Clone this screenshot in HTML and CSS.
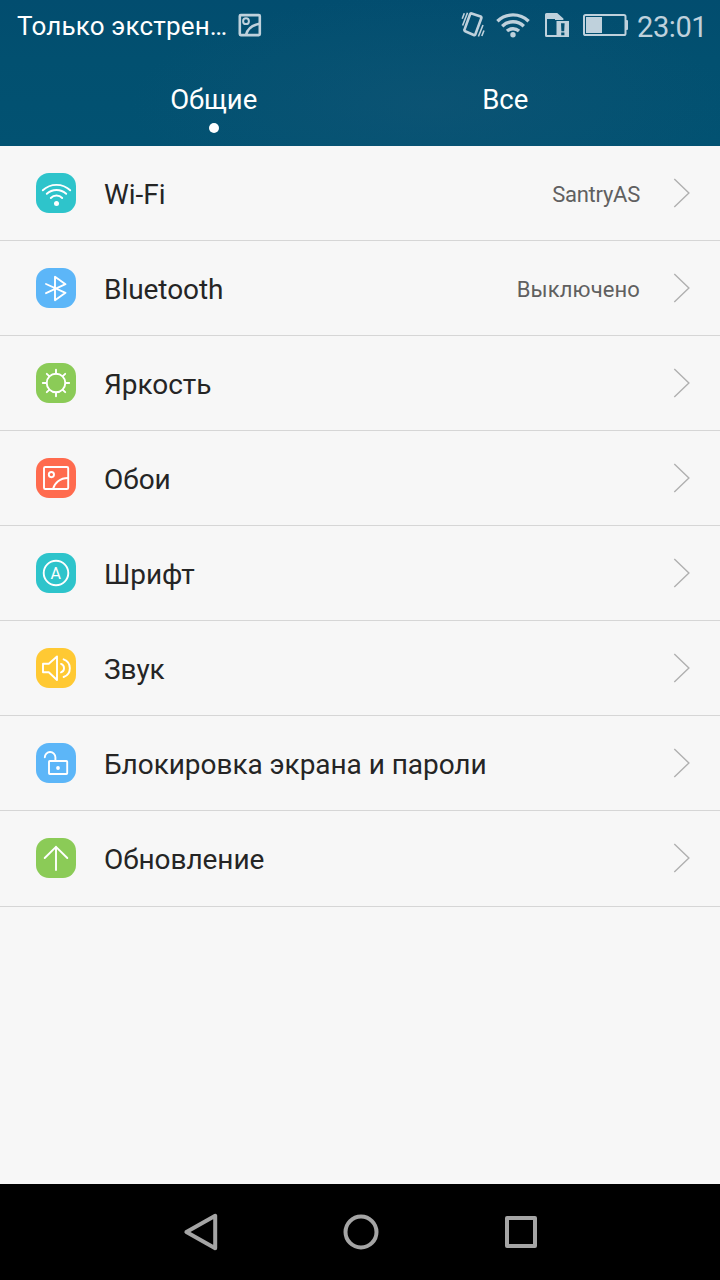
FILE: index.html
```html
<!DOCTYPE html>
<html lang="ru">
<head>
<meta charset="utf-8">
<title>Настройки</title>
<link rel="stylesheet" href="styles.css">
</head>
<body>
<div class="screen">
  <header class="header">
    <div class="status">
      <span class="carrier">Только экстрен…</span>
      <svg class="st-shot" width="24" height="24" viewBox="0 0 24 24"><g class="pale-line" stroke-width="2.6"><rect x="1.8" y="2.1" width="20" height="20" rx="1"/><circle cx="8" cy="8.2" r="2.9" stroke-width="2"/><path d="M8 22C9.5 16 13.5 12.2 21.5 10.8"/></g></svg>
      <span class="spacer"></span>
      <svg class="st-vibrate" width="24" height="28" viewBox="0 0 24 28"><g class="pale-line"><path d="M10.6 2.5L19.6 5.6Q20.8 6 20.3 7.3L14.4 23.3Q13.9 24.5 12.7 24L4.2 20.3Q3 19.8 3.5 18.6L9 3.5Q9.5 2.2 10.6 2.5Z" stroke-width="2.6"/><path d="M1.2 7.8L3.3 2.2M1.6 14.5L6.5 1.8M17.4 25.5L22 14M20.8 25L23 19.5" stroke-width="1.6"/></g></svg>
      <svg class="st-wifi" width="34" height="26" viewBox="0 0 34 26"><g class="pale-line" stroke-width="3.4"><path d="M1.4 9.2A22.5 22.5 0 0 1 32.6 9.2M6.2 14.2A15.5 15.5 0 0 1 27.8 14.2M11 19A9 9 0 0 1 23 19"/></g><circle class="pale" cx="17" cy="22.8" r="2.7"/></svg>
      <svg class="st-sim" width="24" height="24" viewBox="0 0 24 24"><path class="pale" fill-rule="evenodd" d="M1.5 0H12.2L18.4 5.5V7H10V22H14V24H1.5Q0 24 0 22.5V1.5Q0 0 1.5 0ZM2 6V22H10V6Z"/><path class="pale" fill-rule="evenodd" d="M11.5 8H24V24H11.5ZM16 10.3L16.4 18.2H19.2L19.6 10.3ZM16.2 19.4V22.3H19.4V19.4Z"/></svg>
      <svg class="st-battery" width="46" height="22" viewBox="0 0 46 22"><rect class="pale-line" x="1" y="1" width="41.5" height="20" rx="1.6" stroke-width="2"/><path class="pale" d="M3 3H19V19H3ZM43 6H44Q45 6 45 7V15Q45 16 44 16H43Z"/></svg>
      <span class="clock">23:01</span>
    </div>
    <nav class="tabs">
      <div class="tab tab-on">Общие</div>
      <div class="tab">Все</div>
    </nav>
  </header>

  <main class="list">
    <div class="row">
      <svg class="icon teal" viewBox="0 0 40 40"><path d="M6.8 17.3A20 20 0 0 1 34.2 17.3M10.8 20.8A14.3 14.3 0 0 1 30.2 20.8M14.8 25A7.8 7.8 0 0 1 26.2 25"/><circle class="dot" cx="20.5" cy="30.4" r="2.5"/></svg>
      <span class="name">Wi-Fi</span><span class="value value-latin">SantryAS</span>
      <svg class="chevron" viewBox="0 0 18 30"><path d="M1.3 1L15.9 15L1.3 29"/></svg>
    </div>
    <div class="row">
      <svg class="icon blue" viewBox="0 0 40 40"><path d="M10 25.2L29.5 16.2L19 8.8V32.3L29.5 24.8L10 16"/></svg>
      <span class="name">Bluetooth</span><span class="value value-cyrillic">Выключено</span>
      <svg class="chevron" viewBox="0 0 18 30"><path d="M1.3 1L15.9 15L1.3 29"/></svg>
    </div>
    <div class="row">
      <svg class="icon green" viewBox="0 0 40 40"><circle cx="20" cy="20" r="9.3"/><path d="M20 6.8V10.5M20 29.5V33.2M6.8 20H10.5M29.5 20H33.2M10.8 10.8L13.2 13.2M29.2 10.8L26.8 13.2M10.8 29.2L13.2 26.8M29.2 29.2L26.8 26.8"/></svg>
      <span class="name">Яркость</span>
      <svg class="chevron" viewBox="0 0 18 30"><path d="M1.3 1L15.9 15L1.3 29"/></svg>
    </div>
    <div class="row">
      <svg class="icon coral" viewBox="0 0 40 40"><rect x="8" y="9" width="24.2" height="22" rx="1.3"/><circle cx="15.4" cy="16.6" r="2.6"/><path d="M17 31C18.5 25 24 20 32 20"/></svg>
      <span class="name">Обои</span>
      <svg class="chevron" viewBox="0 0 18 30"><path d="M1.3 1L15.9 15L1.3 29"/></svg>
    </div>
    <div class="row">
      <svg class="icon teal" viewBox="0 0 40 40"><circle cx="20" cy="20" r="12.3"/><text class="letter" x="19.8" y="25.7" text-anchor="middle">A</text></svg>
      <span class="name">Шрифт</span>
      <svg class="chevron" viewBox="0 0 18 30"><path d="M1.3 1L15.9 15L1.3 29"/></svg>
    </div>
    <div class="row">
      <svg class="icon amber" viewBox="0 0 40 40"><path d="M7 15.8H12.8L21 8.5V32L12.8 24.3H7ZM25 15.9A4.5 4.5 0 0 1 25 24.4M27.6 11.3A9.4 9.4 0 0 1 27.6 29"/></svg>
      <span class="name">Звук</span>
      <svg class="chevron" viewBox="0 0 18 30"><path d="M1.3 1L15.9 15L1.3 29"/></svg>
    </div>
    <div class="row">
      <svg class="icon blue" viewBox="0 0 40 40"><rect x="13" y="18" width="18.2" height="13" rx="0.8"/><path d="M8.8 14.3A5.3 5.3 0 0 1 19.4 14.3V18"/><circle class="dot" cx="22" cy="25" r="1.9"/></svg>
      <span class="name">Блокировка экрана и пароли</span>
      <svg class="chevron" viewBox="0 0 18 30"><path d="M1.3 1L15.9 15L1.3 29"/></svg>
    </div>
    <div class="row">
      <svg class="icon green" viewBox="0 0 40 40"><path d="M20 32V8.8M8.7 20L20 8.8L31.3 20"/></svg>
      <span class="name">Обновление</span>
      <svg class="chevron" viewBox="0 0 18 30"><path d="M1.3 1L15.9 15L1.3 29"/></svg>
    </div>
  </main>

  <footer class="navbar">
    <svg width="36" height="40" viewBox="0 0 36 40"><path d="M33.2 3.8V36.2L4.4 20Z"/></svg>
    <svg width="40" height="40" viewBox="0 0 40 40"><circle cx="20" cy="20" r="15.5"/></svg>
    <svg width="36" height="40" viewBox="0 0 36 40"><rect x="4" y="6" width="28" height="28"/></svg>
  </footer>
</div>
</body>
</html>
```
FILE: styles.css
```css
* { box-sizing: border-box; }

body {
  margin: 0;
  background: #f7f7f7;
  font-family: Roboto, "Noto Sans", sans-serif;
}

.screen {
  display: flex;
  flex-direction: column;
  width: 720px;
  height: 1280px;
}

.header {
  height: 146px;
  color: #fff;
  background:
    radial-gradient(ellipse 300px 110px at 430px 105px, rgba(20, 85, 118, 0.5), rgba(20, 85, 118, 0)),
    linear-gradient(to bottom, #024d6f 0, #025070 60px, #025272 146px);
}

.status {
  display: flex;
  align-items: flex-start;
  height: 50px;
  padding: 0 15px 0 17px;
}

.status svg { flex: none; }
.carrier { width: 210px; font-size: 26px; line-height: 52px; letter-spacing: 0.17px; white-space: nowrap; }
.spacer { flex: 1; }
.clock { width: 68px; margin-left: 8px; font-size: 29px; line-height: 54px; letter-spacing: -0.4px; color: #bfd1dc; }
.st-shot { margin: 13px 0 0 11px; }
.st-vibrate { margin-top: 11px; }
.st-wifi { margin: 12px 0 0 11px; }
.st-sim { margin: 13px 0 0 15px; }
.st-battery { margin: 14px 0 0 14px; }
.pale { fill: #bfd1dc; }
.pale-line { fill: none; stroke: #bfd1dc; }

.tabs { display: flex; padding: 0 69px 0 68px; }

.tab {
  display: flex;
  flex-direction: column;
  align-items: center;
  flex: 1;
  height: 96px;
  padding-top: 30px;
  font-size: 27.5px;
  line-height: 40px;
}

.tab-on::after {
  content: "";
  width: 10px;
  height: 10px;
  margin-top: 3px;
  border-radius: 50%;
  background: #fff;
}

.list { flex: 1; }

.row {
  display: flex;
  align-items: center;
  height: 95px;
  padding: 0 29px 0 36px;
  border-bottom: 1px solid #d6d6d6;
}

.row:last-child { height: 96px; padding-bottom: 1px; }

.icon {
  flex: none;
  width: 40px;
  height: 40px;
  border-radius: 13px;
  fill: none;
  stroke: #fff;
  stroke-width: 1.9;
  stroke-linecap: round;
  stroke-linejoin: round;
}

.icon .dot { fill: #fff; stroke: none; }
.letter { fill: #fff; stroke: none; font-size: 16px; }
.teal { background: #2ec4cb; }
.blue { background: #5cb6f8; }
.green { background: #8bcb57; }
.coral { background: #ff6b4e; }
.amber { background: #ffc933; }

.name {
  flex: 1;
  padding: 3px 0 0 28px;
  font-size: 28px;
  line-height: 40px;
  letter-spacing: -0.05px;
  color: #252525;
}

.value { padding-top: 3px; font-size: 22px; line-height: 30px; color: #606060; }
.value-latin { letter-spacing: -0.25px; }
.value-cyrillic { letter-spacing: 0.12px; }

.chevron {
  flex: none;
  width: 18px;
  height: 30px;
  margin-left: 33px;
  fill: none;
  stroke: #b0b0b0;
  stroke-width: 1.4;
}

.navbar {
  display: flex;
  justify-content: space-between;
  align-items: center;
  height: 96px;
  padding: 0 181px 0 182px;
  background: #000;
}

.navbar svg {
  fill: none;
  stroke: #a5a5a5;
  stroke-width: 4;
  stroke-linejoin: round;
}
```
